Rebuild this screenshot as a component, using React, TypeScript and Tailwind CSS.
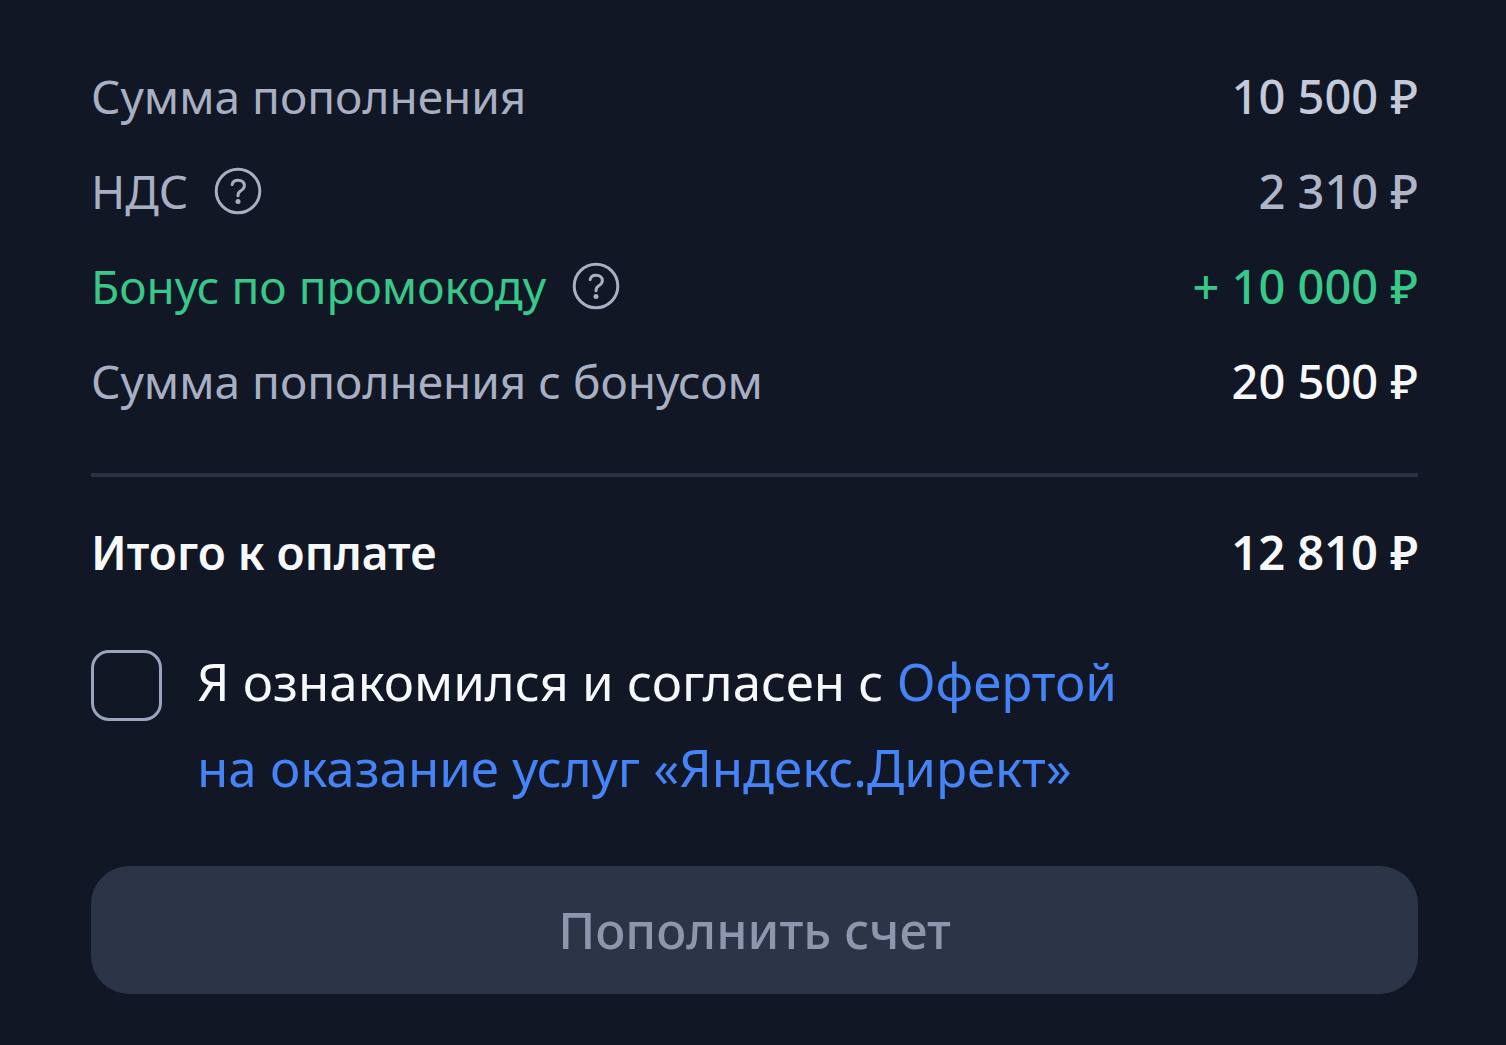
import React from 'react';
import { clsx } from 'clsx';

interface SummaryRowData {
  id: string;
  label: string;
  value: string;
  labelClass: string;
  valueClass: string;
  hint?: string;
}

const rows: SummaryRowData[] = [
  { id: 'amount', label: 'Сумма пополнения', value: '10 500 ₽', labelClass: 'text-[#a8afc3]', valueClass: 'text-[#c4cada]' },
  { id: 'vat', label: 'НДС', value: '2 310 ₽', labelClass: 'text-[#a8afc3]', valueClass: 'text-[#b0b6c9]', hint: 'Подробнее об НДС' },
  { id: 'bonus', label: 'Бонус по промокоду', value: '+ 10 000 ₽', labelClass: 'text-[#37c88a]', valueClass: 'text-[#37c88a]', hint: 'Подробнее о бонусе' },
  { id: 'total', label: 'Сумма пополнения с бонусом', value: '20 500 ₽', labelClass: 'text-[#a8afc3]', valueClass: 'text-[#f7f8fa]' },
];

const HintButton: React.FC<{ label: string }> = ({ label }) => (
  <button type="button" aria-label={label} className="text-[#a8afc3]">
    <svg viewBox="0 0 48 48" fill="none" stroke="currentColor" strokeLinecap="round" strokeLinejoin="round" className="size-12">
      <circle cx="24" cy="24" r="21.8" strokeWidth="3" />
      <path d="M18.2 17.6C18.6 14.9 20.8 13.3 24 13.3c3.8 0 6.4 2.1 6.4 5.3 0 2.5-1.4 3.8-3.6 5.1-2.1 1.3-2.8 2.3-2.8 4.6v.5" strokeWidth="3" />
      <circle cx="24" cy="34.4" r="2.5" fill="currentColor" stroke="none" />
    </svg>
  </button>
);

const SummaryRow: React.FC<{ row: SummaryRowData }> = ({ row }) => (
  <div className="flex h-16 items-center justify-between">
    <dt className={clsx('flex items-center gap-[26px] text-[46px]', row.labelClass)}>
      {row.label}
      {row.hint && <HintButton label={row.hint} />}
    </dt>
    <dd className={clsx('text-[47px] font-medium', row.valueClass)}>{row.value}</dd>
  </div>
);

export default function App() {
  return (
    <main className="min-h-screen bg-[#111724] pt-16 pr-[88px] pb-[51px] pl-[91px] font-['Noto_Sans',sans-serif] leading-16">
      <dl className="flex flex-col gap-[31px]">
        {rows.map((row) => (
          <SummaryRow key={row.id} row={row} />
        ))}
      </dl>

      <hr className="mt-15 border-t-4 border-[#2b3140]" />

      <div className="mt-[43px] flex items-center justify-between font-semibold text-[#f7f8fa]">
        <span className="text-[46px]">Итого к оплате</span>
        <span className="text-[47px]">12 810 ₽</span>
      </div>

      <div className="mt-[54px] flex gap-[35px]">
        <input
          id="offer"
          type="checkbox"
          className="mt-3 size-[71px] shrink-0 appearance-none rounded-[18px] border-3 border-[#9ba4bf] checked:bg-[#4583f7]"
        />
        <label htmlFor="offer" className="text-[51px] leading-[86px] text-[#f7f8fa]">
          Я ознакомился и согласен с{' '}
          <a href="#offer" className="text-[#4583f7]">
            Офертой
            <br />
            на оказание услуг «Яндекс.Директ»
          </a>
        </label>
      </div>

      <button type="button" disabled className="mt-14 h-32 w-full rounded-[38px] bg-[#2c3448] text-[50px] font-medium text-[#8d96ac]">
        Пополнить счет
      </button>
    </main>
  );
}
